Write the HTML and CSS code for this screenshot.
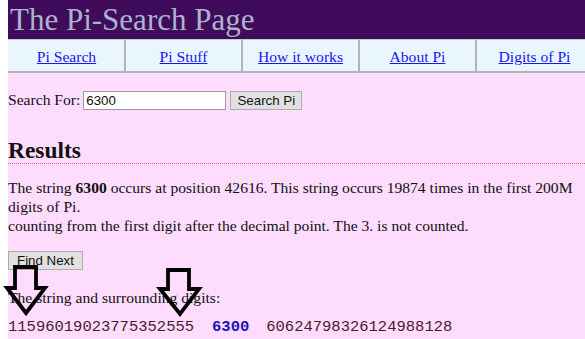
FILE: index.html
```html
<!doctype html>
<html lang="en">
  <head>
    <meta charset="UTF-8" />
    <title>The Pi-Search Page</title>
    <link rel="stylesheet" href="styles.css">
  </head>
  <body>
    <div class="page">
      <div class="header">The Pi-Search Page</div>
      <div class="nav">
        <div class="nav-cell"><a href="#">Pi Search</a></div>
        <div class="nav-cell"><a href="#">Pi Stuff</a></div>
        <div class="nav-cell"><a href="#">How it works</a></div>
        <div class="nav-cell"><a href="#">About Pi</a></div>
        <div class="nav-cell"><a href="#">Digits of Pi</a></div>
      </div>
      <form class="search">
        <label for="q">Search For:</label>
        <input id="q" class="search-input" type="text" value="6300">
        <button type="button" class="btn search-btn">Search Pi</button>
      </form>
      <h2 class="results-title">Results</h2>
      <p class="results-text">The string <b>6300</b> occurs at position 42616. This string occurs 19874 times in the first 200M digits of Pi.<br>counting from the first digit after the decimal point. The 3. is not counted.</p>
      <button type="button" class="btn next-btn">Find Next</button>
      <p class="around">The string and surrounding digits:</p>
      <div class="digits"><span>11596019023775352555</span><b class="hit">6300</b><span>60624798326124988128</span></div>

      <svg class="arrows" width="585" height="339" viewBox="0 0 585 339">
        <path d="M15 267 H36 V288 H45 L26 313 L7 288 H15 Z" />
        <path d="M168 270 H189 V289 H199 L180 314 L160 289 H168 Z" />
      </svg>
    </div>
  </body>
</html>
```

FILE: styles.css
```css
body {
  margin: 0;
  padding-left: 8px;
  background: #fff;
  overflow: hidden;
  font-family: "Liberation Serif", "Times New Roman", serif;
  font-size: 15.6px;
  color: #111;
}
.page {
  position: relative;
  background: #fedcfd;
  min-height: 339px;
}
.header {
  height: 39px;
  line-height: 39px;
  padding-left: 2px;
  background: #400b5b;
  color: #a9b5cc;
  font-size: 31px;
}
.nav {
  display: flex;
  width: 590px;
  height: 31px;
  padding-left: 1px;
  background: #e9f6fe;
  border-top: 1px solid #c8c8d8;
  border-bottom: 2px solid #b4b4b4;
}
.nav-cell {
  flex: 0 0 115px;
  display: flex;
  align-items: center;
  justify-content: center;
  border-right: 2px solid #b4b4b4;
}
.nav-cell:last-child {
  border-right: none;
}
.nav-cell a {
  color: #1a14f0;
  padding-top: 2px;
}
.search {
  display: flex;
  align-items: center;
  height: 20px;
  margin: 17px 0 0;
}
.search-input {
  width: 137px;
  height: 15px;
  margin: 0 0 0 3px;
  padding: 1px 2px;
  border: 1px solid #9a9a9a;
  background: #fff;
  font-family: "Liberation Sans", Arial, sans-serif;
  font-size: 13.3px;
  color: #111;
}
.btn {
  height: 19px;
  padding: 0 6px;
  background: #e1e1e1;
  border: 1px solid #adadad;
  border-radius: 0;
  font-family: "Liberation Sans", Arial, sans-serif;
  font-size: 13.3px;
  color: #111;
}
.search-btn {
  width: 72px;
  margin-left: 4px;
}
.results-title {
  margin: 28px 0 0;
  font-size: 23.4px;
  line-height: 25px;
  border-bottom: 1px dotted #e8606e;
}
.results-text {
  margin: 14px 0 0;
  line-height: 19px;
}
.next-btn {
  display: block;
  width: 75px;
  margin-top: 16px;
}
.around {
  margin: 18px 0 0;
  line-height: 19px;
}
.digits {
  margin-top: 11px;
  line-height: 19px;
  font-family: "Liberation Mono", "Courier New", monospace;
  font-size: 15.5px;
  color: #4a1a2e;
  white-space: pre;
}
.digits .hit {
  margin: 0 17px 0 18px;
  color: #1a14b8;
}
.arrows {
  position: absolute;
  left: -8px;
  top: 0;
  pointer-events: none;
}
.arrows path {
  fill: none;
  stroke: #000;
  stroke-width: 3.8;
  stroke-linejoin: miter;
}
```
